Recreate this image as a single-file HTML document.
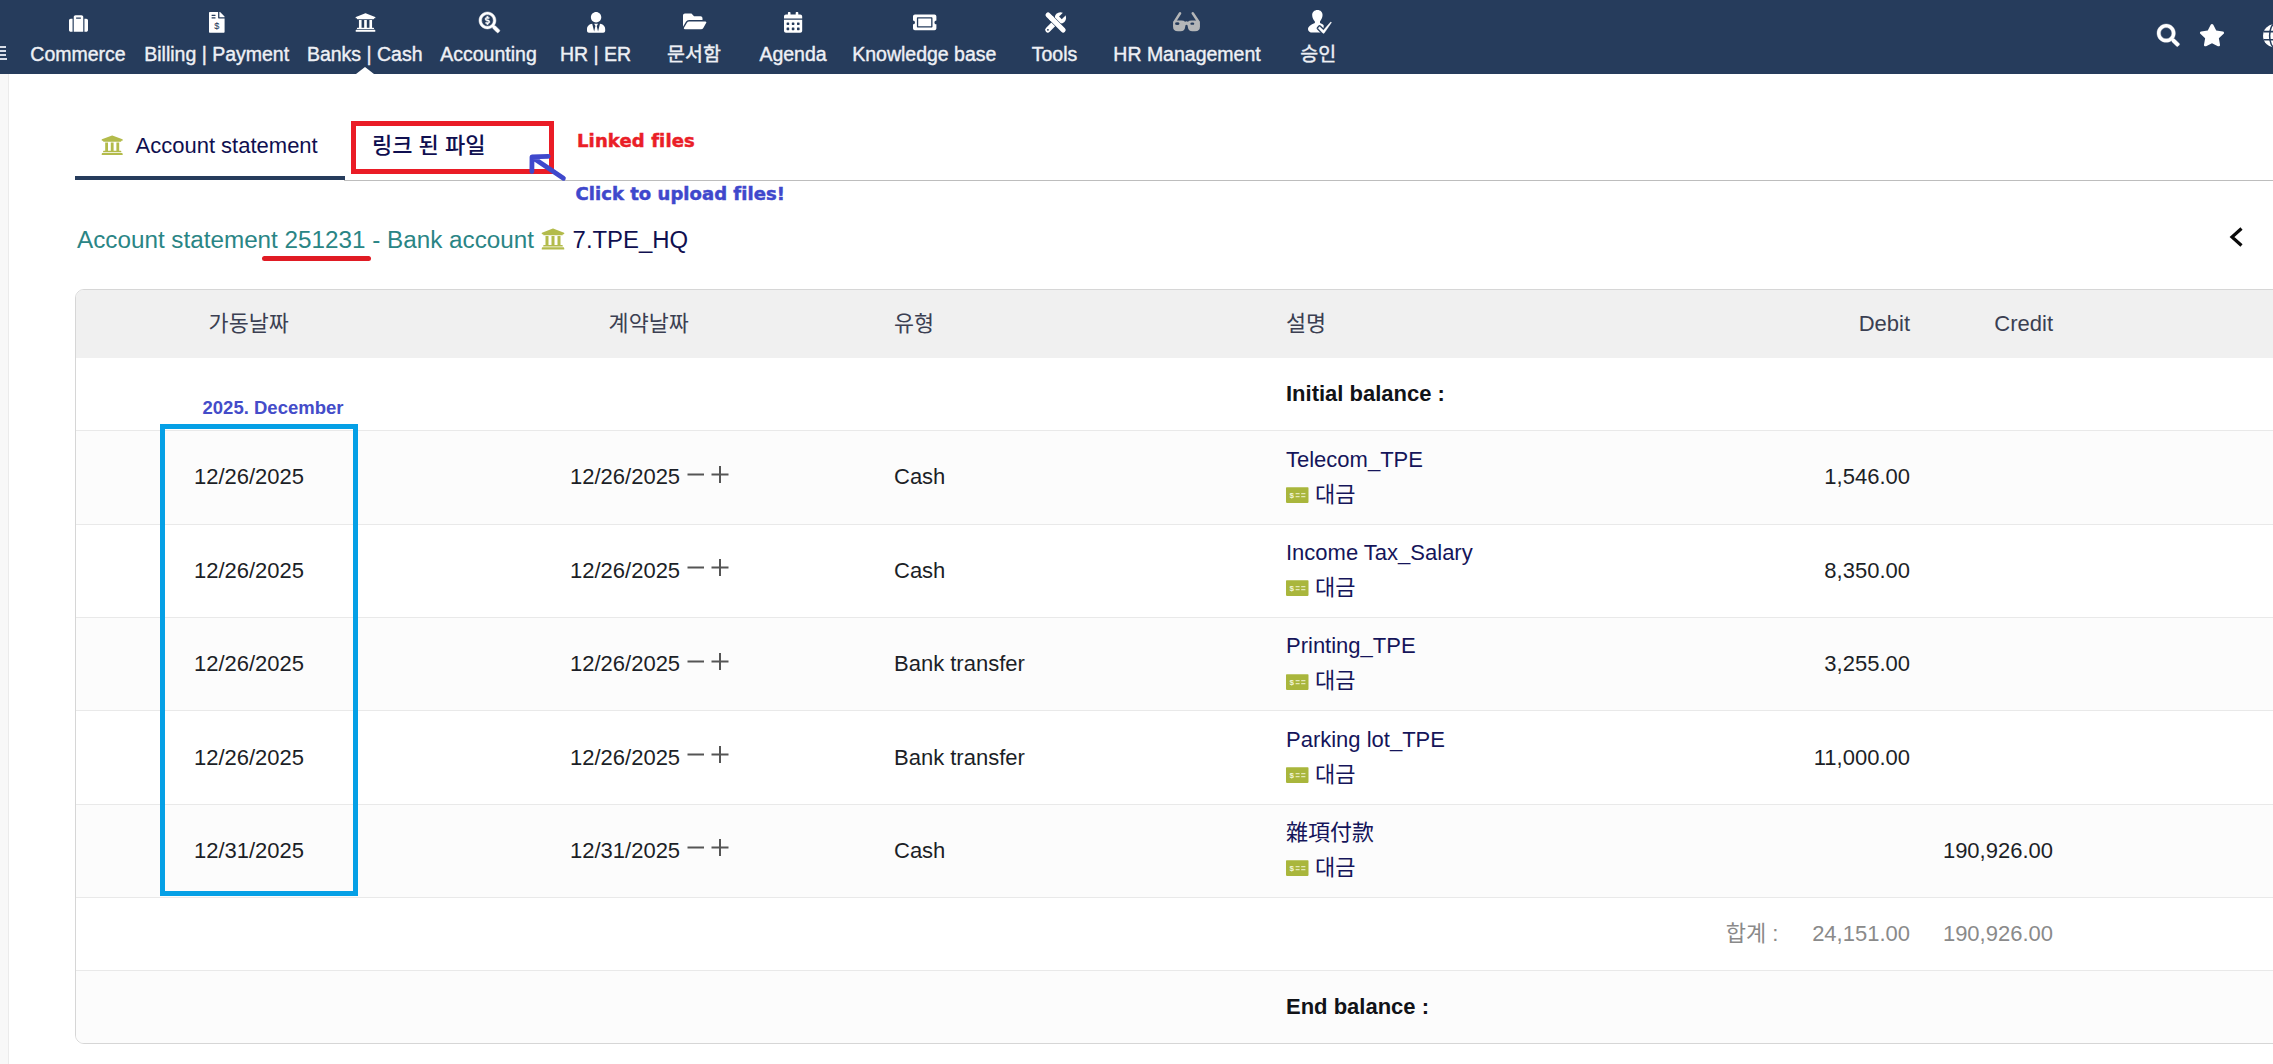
<!DOCTYPE html>
<html lang="ko">
<head>
<meta charset="utf-8">
<title>Account statement</title>
<style>
*{box-sizing:border-box;margin:0;padding:0}
html,body{width:2273px;height:1064px;overflow:hidden;background:#fff}
body{font-family:"Liberation Sans","Noto Sans CJK KR",sans-serif;color:#1f1f1f;position:relative;font-size:22px}
.abs{position:absolute;white-space:nowrap}
#nav{position:absolute;left:0;top:0;width:2273px;height:74px;background:#263c5c;overflow:hidden}
.nl{position:absolute;top:41px;height:26px;line-height:26px;font-size:19.5px;color:#eef0f5;-webkit-text-stroke:0.4px #eef0f5;white-space:nowrap;transform:translateX(-50%)}
.burger{position:absolute;left:0;top:46.3px;width:8px}
.burger i{display:block;height:1.6px;width:5.6px;background:#d8dde7;margin-bottom:2.3px}
.burger i:last-child{width:7.3px;margin-top:0.6px}
#navtri{position:absolute;left:356px;top:67px;width:0;height:0;border-left:9px solid transparent;border-right:9px solid transparent;border-bottom:7.5px solid #fff}
#side{position:absolute;left:0;top:74px;width:9px;height:990px;background:#f8f8f8;border-right:1px solid #ebebeb}
#tabline{position:absolute;left:344px;top:180px;width:1929px;height:1px;background:#bdbdbd}
#tabactive{position:absolute;left:75px;top:176px;width:269.5px;height:4.4px;background:#263c5c}
.tab1{left:135.5px;top:146px;transform:translateY(-50%);font-size:22px;color:#0f0f50}
.tab2{left:372px;top:143px;transform:translateY(-50%);font-size:22px;color:#0f0f50;font-family:"Liberation Sans","Noto Sans CJK KR",sans-serif;font-weight:500}
#redbox{position:absolute;left:351px;top:121px;width:203px;height:53px;border:5px solid #ea1c26}
.ann{-webkit-text-stroke:0.5px currentColor;letter-spacing:0.12px;font-family:"DejaVu Sans","Liberation Sans",sans-serif;font-weight:bold;font-size:18px;line-height:22px}
.ann.red{color:#ea1e27}
.ann.blue{color:#3f48cc;letter-spacing:0.04px}
.title{left:77px;top:240px;transform:translateY(-50%);font-size:24.26px}
.teal{color:#2a8585}
.navy{color:#0f0f50;font-size:23.9px}
.tbank{display:inline-block;width:38.6px}
#redline{position:absolute;left:262px;top:256px;width:109px;height:4.5px;border-radius:3px;background:#e01b24}
#table{position:absolute;left:75px;top:289px;width:2300px;height:755px;border:1px solid #d6d6d6;border-radius:9px;overflow:hidden;background:#fff}
.thead{position:absolute;left:0;top:0;width:100%;height:67.5px;background:#f0f0f0}
.row{position:absolute;left:0;width:100%;border-top:1px solid #e9e9e9}
.th{font-size:21.8px;color:#3b3f52}
.th.kr{font-family:"Liberation Sans","Noto Sans CJK KR",sans-serif}
.th.r{font-size:22px;color:#3b3f52}
.b{font-weight:bold;font-size:22px;color:#111318}
.dec{font-weight:bold;font-size:18.5px;color:#444cc9}
.td{font-size:22px;color:#1c1f27}
.td.g{color:#8a8a8a}
.desc{font-size:22px;color:#15155a}
.desc.kr2{font-family:"Liberation Sans","Noto Sans CJK KR",sans-serif;font-size:22px}
.desc.cjk{font-family:"Liberation Sans","Noto Sans CJK KR","Noto Sans CJK TC",sans-serif;font-size:22px}
#bluebox{position:absolute;left:160px;top:424px;width:198px;height:472px;border:5px solid #05a0e6}
.ni{position:absolute;overflow:visible}

</style>
</head>
<body>
<div id="nav">
<div class="burger"><i></i><i></i><i></i><i></i></div>
<div class="nl" style="left:78px">Commerce</div>
<div class="nl" style="left:216.7px">Billing | Payment</div>
<div class="nl" style="left:364.7px">Banks | Cash</div>
<div class="nl" style="left:488.5px">Accounting</div>
<div class="nl" style="left:595.5px">HR | ER</div>
<div class="nl" style="left:694px">문서함</div>
<div class="nl" style="left:793px">Agenda</div>
<div class="nl" style="left:924.3px">Knowledge base</div>
<div class="nl" style="left:1054.5px">Tools</div>
<div class="nl" style="left:1187px">HR Management</div>
<div class="nl" style="left:1318.3px">승인</div>
<svg class="ni" style="left:69.2px;top:13.7px" width="19" height="19" viewBox="0 0 512 512" ><path fill="#fff" d="M128 480h256V80c0-26.500-21.500-48-48-48H176c-26.500 0-48 21.500-48 48v400zm64-384h128v32H192V96zm320 80v256c0 26.500-21.500 48-48 48h-48V128h48c26.500 0 48 21.500 48 48zM96 480H48c-26.500 0-48-21.500-48-48V176c0-26.500 21.500-48 48-48h48v352z"/></svg>
<svg class="ni" style="left:208.6px;top:12px" width="15.6" height="20.8" viewBox="0 0 384 512" ><path fill="#fff" d="M224 0 H24 C10.700 0 0 10.700 0 24 v464 c0 13.300 10.700 24 24 24 h336 c13.300 0 24-10.700 24-24 V160 H248 c-13.200 0-24-10.800-24-24 V0z M256 0 v128 h128 v-6.100 c0-6.300-2.500-12.400-7-16.900 L279.100 7 c-4.500-4.500-10.600-7-17-7 H256z"/><rect x="64" y="66" width="96" height="30" rx="6" fill="#263c5c"/><rect x="64" y="130" width="96" height="30" rx="6" fill="#263c5c"/><text x="192" y="412" text-anchor="middle" font-family="Liberation Sans, sans-serif" font-size="225" fill="#263c5c" stroke="#263c5c" stroke-width="2">$</text></svg>
<svg class="ni" style="left:354.8px;top:12.2px" width="21" height="21" viewBox="0 0 512 512" ><path fill="#fff" d="M496 128v16a8 8 0 0 1-8 8h-24v12c0 6.627-5.373 12-12 12H60c-6.627 0-12-5.373-12-12v-12H24a8 8 0 0 1-8-8v-16a8 8 0 0 1 4.941-7.392l232-88a7.996 7.996 0 0 1 6.118 0l232 88A8 8 0 0 1 496 128zm-24 304H40c-13.255 0-24 10.745-24 24v16a8 8 0 0 0 8 8h464a8 8 0 0 0 8-8v-16c0-13.255-10.745-24-24-24zM96 192v192H60c-6.627 0-12 5.373-12 12v20h416v-20c0-6.627-5.373-12-12-12h-36V192h-64v192h-64V192h-64v192h-64V192H96z"/></svg>
<svg class="ni" style="left:478.6px;top:11.9px" width="20.8" height="20.8" viewBox="0 0 512 512" ><path fill="#fff" stroke="#fff" stroke-width="12" d="M505.04 442.66l-99.71-99.69c-4.5-4.5-10.6-7-17-7h-16.3c27.6-35.3 44-79.69 44-127.99C416.03 93.09 322.92 0 208.02 0S0 93.09 0 207.98s93.11 207.980 208.020 207.980c48.3 0 92.71-16.4 128.010-44v16.3c0 6.4 2.5 12.5 7 17l99.710 99.690c9.4 9.4 24.6 9.4 33.9 0l28.3-28.3c9.4-9.4 9.4-24.59.1-33.990zm-297.020-90.7c-79.540 0-144.020-64.460-144.020-143.980 0-79.530 64.470-143.980 144.020-143.980 79.540 0 144.010 64.460 144.010 143.980 0 79.530-64.470 143.980-144.010 143.980zm27.110-152.540l-45.010-13.5c-5.160-1.550-8.770-6.780-8.770-12.730 0-7.270 5.3-13.190 11.8-13.190h28.110c4.560 0 8.960 1.290 12.820 3.720 3.240 2.030 7.360 1.910 10.130-.73l11.750-11.210c3.530-3.370 3.330-9.210-.57-12.140-9.1-6.830-20.080-10.770-31.370-11.350V112c0-4.420-3.580-8-8-8h-16c-4.420 0-8 3.580-8 8v16.120c-23.630.63-42.680 20.550-42.680 45.070 0 19.970 12.990 37.810 31.580 43.390l45.010 13.5c5.160 1.550 8.770 6.780 8.770 12.730 0 7.270-5.3 13.190-11.8 13.190h-28.1c-4.560 0-8.960-1.290-12.820-3.720-3.240-2.030-7.360-1.910-10.130.73l-11.750 11.210c-3.530 3.370-3.330 9.210.57 12.140 9.1 6.830 20.080 10.770 31.370 11.350V304c0 4.420 3.580 8 8 8h16c4.420 0 8-3.580 8-8v-16.120c23.630-.63 42.680-20.540 42.680-45.070 0-19.970-12.990-37.810-31.590-43.390z"/></svg>
<svg class="ni" style="left:586.6px;top:12px" width="18.2" height="20.8" viewBox="0 0 448 512" ><path fill="#fff" d="M224 256c70.700 0 128-57.300 128-128S294.700 0 224 0 96 57.300 96 128s57.300 128 128 128zm95.800 32.600L272 480l-32-136 32-56h-96l32 56-32 136-47.800-191.400C56.900 292 0 350.300 0 422.400V464c0 26.500 21.500 48 48 48h352c26.500 0 48-21.500 48-48v-41.600c0-72.100-56.900-130.400-128.200-133.800z"/></svg>
<svg class="ni" style="left:683px;top:10.9px" width="23.4" height="20.8" viewBox="0 0 576 512" ><path fill="#fff" d="M572.694 292.093L500.270 416.248A63.997 63.997 0 0 1 444.989 448H45.025c-18.523 0-30.064-20.093-20.731-36.093l72.424-124.155A64 64 0 0 1 152 256h399.964c18.523 0 30.064 20.093 20.730 36.093zM152 224h328v-48c0-26.510-21.490-48-48-48H272l-64-64H48C21.490 64 0 85.490 0 112v278.046l69.077-118.418C86.214 242.250 117.989 224 152 224z"/></svg>
<svg class="ni" style="left:784.3px;top:12px" width="18.2" height="20.8" viewBox="0 0 448 512" ><path fill="#fff" d="M0 464c0 26.500 21.500 48 48 48h352c26.500 0 48-21.500 48-48V192H0v272zm320-196c0-6.600 5.400-12 12-12h40c6.600 0 12 5.400 12 12v40c0 6.600-5.400 12-12 12h-40c-6.600 0-12-5.400-12-12v-40zm0 128c0-6.600 5.400-12 12-12h40c6.600 0 12 5.400 12 12v40c0 6.600-5.400 12-12 12h-40c-6.600 0-12-5.400-12-12v-40zM192 268c0-6.600 5.400-12 12-12h40c6.600 0 12 5.400 12 12v40c0 6.600-5.400 12-12 12h-40c-6.600 0-12-5.400-12-12v-40zm0 128c0-6.600 5.400-12 12-12h40c6.600 0 12 5.400 12 12v40c0 6.600-5.400 12-12 12h-40c-6.600 0-12-5.400-12-12v-40zM64 268c0-6.600 5.400-12 12-12h40c6.600 0 12 5.400 12 12v40c0 6.600-5.400 12-12 12H76c-6.600 0-12-5.400-12-12v-40zm0 128c0-6.600 5.400-12 12-12h40c6.600 0 12 5.400 12 12v40c0 6.600-5.400 12-12 12H76c-6.600 0-12-5.400-12-12v-40zM400 64h-48V16c0-8.800-7.200-16-16-16h-32c-8.800 0-16 7.200-16 16v48H160V16c0-8.800-7.200-16-16-16h-32c-8.800 0-16 7.200-16 16v48H48C21.500 64 0 85.500 0 112v48h448v-48c0-26.500-21.500-48-48-48z"/></svg>
<svg class="ni" style="left:912.6px;top:12px" width="23.4" height="20.8" viewBox="0 0 576 512" ><path fill="#fff" d="M128 160h320v192H128V160zm400 96c0 26.510 21.490 48 48 48v96c0 26.510-21.490 48-48 48H48c-26.510 0-48-21.490-48-48v-96c26.510 0 48-21.490 48-48s-21.490-48-48-48v-96c0-26.510 21.490-48 48-48h480c26.510 0 48 21.490 48 48v96c-26.510 0-48 21.490-48 48zm-48-104c0-13.255-10.745-24-24-24H120c-13.255 0-24 10.745-24 24v208c0 13.255 10.745 24 24 24h336c13.255 0 24-10.745 24-24V152z"/></svg>
<svg class="ni" style="left:1044.6px;top:11.9px" width="21.2" height="21" viewBox="0 0 100 100" ><g fill="none">
<path d="M13 85 L60 38" stroke="#fff" stroke-width="25" stroke-linecap="round"/>
<circle cx="73" cy="28" r="27" fill="#fff"/>
<path d="M73 28 L102 -1" stroke="#263c5c" stroke-width="18"/>
<path d="M14 14 L86 86" stroke="#263c5c" stroke-width="29" stroke-linecap="round"/>
<path d="M14 14 L30 30" stroke="#fff" stroke-width="24" stroke-linecap="round"/>
<path d="M30 30 L86 86" stroke="#fff" stroke-width="24" stroke-linecap="round"/>
</g>
<circle cx="13.5" cy="85" r="4.5" fill="#263c5c"/></svg>
<svg class="ni" style="left:1173.1px;top:11.9px" width="27" height="19.3" viewBox="0 0 134 96" ><g fill="none" stroke="#b4b6b8" stroke-width="12.5" stroke-linecap="round">
<path d="M35 6 L7 50"/><path d="M98 6 L127 50"/>
</g>
<path fill="#b4b6b8" d="M0 58 q0-16 16-16 h26 q12 0 18 6 q7-3 14 0 q6-6 18-6 h26 q16 0 16 16 v14 q0 24-24 24 h-14 q-20 0-22-20 l-2-10 q-5-5-10 0 l-2 10 q-2 20-22 20 h-14 q-24 0-24-24z"/>
<ellipse cx="21" cy="58" rx="11" ry="6.5" fill="#263c5c"/><ellipse cx="96" cy="58" rx="10" ry="6" fill="#263c5c"/></svg>
<svg class="ni" style="left:1307.8px;top:9.75px" width="23.2" height="23.2" viewBox="245 180 725 725" ><path fill="#fff" d="M540 180 C640 180 700 250 700 340 C700 430 650 500 620 540 L620 590 C660 610 715 625 735 660 L735 880 L330 880 C270 870 245 820 245 770 C245 700 330 640 460 590 L460 540 C420 500 375 430 375 340 C375 250 440 180 540 180Z"/>
<path d="M562 752 L608 700 L728 815 L955 555 L978 570 L748 905 L712 905Z" fill="#263c5c" stroke="#263c5c" stroke-width="96" stroke-linejoin="round"/>
<path d="M562 752 L608 700 L728 815 L955 555 L978 570 L748 905 L712 905Z" fill="#fff" stroke="#fff" stroke-width="14" stroke-linejoin="round"/></svg>
<svg class="ni" style="left:2156.6px;top:23.6px" width="22.6" height="22.6" viewBox="0 0 512 512" ><path fill="#fff" stroke="#fff" stroke-width="8" d="M505 442.700L405.300 343c-4.500-4.500-10.600-7-17-7H372c27.600-35.300 44-79.700 44-128C416 93.100 322.900 0 208 0S0 93.100 0 208s93.100 208 208 208c48.300 0 92.700-16.400 128-44v16.300c0 6.400 2.500 12.500 7 17l99.700 99.700c9.400 9.400 24.600 9.400 33.900 0l28.300-28.300c9.400-9.400 9.400-24.600.100-34zM208 336c-70.700 0-128-57.200-128-128 0-70.700 57.200-128 128-128 70.700 0 128 57.200 128 128 0 70.700-57.200 128-128 128z"/></svg>
<svg class="ni" style="left:2199.3px;top:23.5px" width="26" height="22.3" viewBox="0 0 576 512" preserveAspectRatio="none"><path fill="#fff" d="M259.300 17.800L194 150.200 47.900 171.500c-26.200 3.800-36.700 36.100-17.700 54.600l105.700 103-25 145.500c-4.500 26.300 23.200 46 46.400 33.700L288 439.600l130.700 68.700c23.200 12.200 50.900-7.400 46.400-33.700l-25-145.500 105.700-103c19-18.500 8.500-50.800-17.700-54.600L382 150.200 316.700 17.800c-11.700-23.600-45.600-23.900-57.400 0z"/></svg>
<svg class="ni" style="left:2262.2px;top:23.3px" width="25.4" height="25.4" viewBox="0 0 100 100" ><circle cx="50" cy="50" r="46" fill="#fff"/>
<g fill="none" stroke="#263c5c" stroke-width="6"><ellipse cx="50" cy="50" rx="20" ry="46"/><path d="M50 4 V96 M6 34 H94 M6 66 H94"/></g></svg>
<div id="navtri"></div>
</div>
<div id="side"></div>
<div id="tabline"></div><div id="tabactive"></div>
<div class="abs tab1">Account statement</div>
<div id="redbox"></div>
<div class="abs tab2">링크 된 파일</div>
<div class="abs ann red" style="left:577px;top:129.5px">Linked files</div>
<div class="abs ann blue" style="left:575.5px;top:182.5px">Click to upload files!</div>
<svg class="abs" style="left:520px;top:145px" width="60" height="45" viewBox="520 145 60 45"><path d="M563.4 178.3 L532.2 157.2 M548.2 156.3 L532 156.8 L531.9 171.6" fill="none" stroke="#3f48cc" stroke-width="4.8" stroke-linecap="round" stroke-linejoin="round"/></svg>
<div class="abs title"><span class="teal">Account statement 251231 - Bank account</span><span class="tbank"></span><span class="navy">7.TPE_HQ</span></div>
<div id="redline"></div>
<svg class="abs" style="left:101.2px;top:133.8px" width="22.4" height="22.4" viewBox="0 0 512 512"><path fill="#b3bb4b" d="M496 128v16a8 8 0 0 1-8 8h-24v12c0 6.627-5.373 12-12 12H60c-6.627 0-12-5.373-12-12v-12H24a8 8 0 0 1-8-8v-16a8 8 0 0 1 4.941-7.392l232-88a7.996 7.996 0 0 1 6.118 0l232 88A8 8 0 0 1 496 128zm-24 304H40c-13.255 0-24 10.745-24 24v16a8 8 0 0 0 8 8h464a8 8 0 0 0 8-8v-16c0-13.255-10.745-24-24-24zM96 192v192H60c-6.627 0-12 5.373-12 12v20h416v-20c0-6.627-5.373-12-12-12h-36V192h-64v192h-64V192h-64v192h-64V192H96z"/></svg>
<svg class="abs" style="left:540.65px;top:227.4px" width="24" height="24" viewBox="0 0 512 512"><path fill="#b3bb4b" d="M496 128v16a8 8 0 0 1-8 8h-24v12c0 6.627-5.373 12-12 12H60c-6.627 0-12-5.373-12-12v-12H24a8 8 0 0 1-8-8v-16a8 8 0 0 1 4.941-7.392l232-88a7.996 7.996 0 0 1 6.118 0l232 88A8 8 0 0 1 496 128zm-24 304H40c-13.255 0-24 10.745-24 24v16a8 8 0 0 0 8 8h464a8 8 0 0 0 8-8v-16c0-13.255-10.745-24-24-24zM96 192v192H60c-6.627 0-12 5.373-12 12v20h416v-20c0-6.627-5.373-12-12-12h-36V192h-64v192h-64V192h-64v192h-64V192H96z"/></svg>
<svg class="abs" style="left:2226px;top:224px" width="22" height="26" viewBox="0 0 22 26"><path d="M15.5 4.5 L6 13 L15.5 21.5" fill="none" stroke="#0a0a0a" stroke-width="3.2"/></svg>
<div id="table">
<div class="thead"></div>
<div class="row" style="top:67.5px;height:73px;background:#fff;border-top:none"></div>
<div class="row" style="top:140.0px;height:94px;background:#fcfcfc"></div>
<div class="row" style="top:234.0px;height:93px;background:#fff"></div>
<div class="row" style="top:327.0px;height:93px;background:#fcfcfc"></div>
<div class="row" style="top:420.0px;height:94px;background:#fff"></div>
<div class="row" style="top:514.0px;height:93px;background:#fcfcfc"></div>
<div class="row" style="top:607px;height:73px;background:#fff"></div>
<div class="row" style="top:680px;height:74px;background:#fcfcfc"></div>
</div>
<div class="abs th kr" style="left:248.7px;top:321.4px;transform:translate(-50%,-50%)">가동날짜</div>
<div class="abs th kr" style="left:648.7px;top:321.4px;transform:translate(-50%,-50%)">계약날짜</div>
<div class="abs th kr" style="left:894px;top:321.4px;transform:translateY(-50%)">유형</div>
<div class="abs th kr" style="left:1286px;top:321.4px;transform:translateY(-50%)">설명</div>
<div class="abs th r" style="right:363px;top:324px;transform:translateY(-50%)">Debit</div>
<div class="abs th r" style="right:220px;top:324px;transform:translateY(-50%)">Credit</div>
<div class="abs b" style="left:1286px;top:394px;transform:translateY(-50%)">Initial balance :</div>
<div class="abs dec" style="left:273px;top:407.5px;transform:translate(-50%,-50%)">2025. December</div>
<div class="abs td" style="left:249px;top:477.3px;transform:translate(-50%,-50%)">12/26/2025</div>
<div class="abs td" style="left:570px;top:477.3px;transform:translateY(-50%)">12/26/2025</div>
<svg class="abs" style="left:686px;top:463.7px" width="44" height="22" viewBox="0 0 44 22"><path d="M1.5 10.5 H18 M25.5 10.5 H42.5 M34 2 V19" fill="none" stroke="#555" stroke-width="2"/></svg>
<div class="abs td" style="left:894px;top:477.3px;transform:translateY(-50%)">Cash</div>
<div class="abs desc" style="left:1286px;top:459.8px;transform:translateY(-50%)">Telecom_TPE</div>
<svg class="abs" style="left:1286px;top:486.7px" width="23" height="16" viewBox="0 0 23 16"><rect x="0" y="0.3" width="22.5" height="15.6" rx="0.8" fill="#a9b63c"/><path d="M9.6 6.6 H13.6 M15.2 6.6 H19.4 M9.6 9.6 H13.6 M15.2 9.6 H19.4" stroke="#e3e8b8" stroke-width="1.3"/><text x="3.4" y="11" font-family="Liberation Sans, sans-serif" font-size="8" font-weight="bold" fill="#f2f5d8">$</text></svg>
<div class="abs desc kr2" style="left:1315px;top:491.5px;transform:translateY(-50%)">대금</div>
<div class="abs td" style="right:363px;top:477.3px;transform:translateY(-50%)">1,546.00</div>
<div class="abs td" style="left:249px;top:570.7px;transform:translate(-50%,-50%)">12/26/2025</div>
<div class="abs td" style="left:570px;top:570.7px;transform:translateY(-50%)">12/26/2025</div>
<svg class="abs" style="left:686px;top:557.1px" width="44" height="22" viewBox="0 0 44 22"><path d="M1.5 10.5 H18 M25.5 10.5 H42.5 M34 2 V19" fill="none" stroke="#555" stroke-width="2"/></svg>
<div class="abs td" style="left:894px;top:570.7px;transform:translateY(-50%)">Cash</div>
<div class="abs desc" style="left:1286px;top:552.7px;transform:translateY(-50%)">Income Tax_Salary</div>
<svg class="abs" style="left:1286px;top:580.1px" width="23" height="16" viewBox="0 0 23 16"><rect x="0" y="0.3" width="22.5" height="15.6" rx="0.8" fill="#a9b63c"/><path d="M9.6 6.6 H13.6 M15.2 6.6 H19.4 M9.6 9.6 H13.6 M15.2 9.6 H19.4" stroke="#e3e8b8" stroke-width="1.3"/><text x="3.4" y="11" font-family="Liberation Sans, sans-serif" font-size="8" font-weight="bold" fill="#f2f5d8">$</text></svg>
<div class="abs desc kr2" style="left:1315px;top:584.9px;transform:translateY(-50%)">대금</div>
<div class="abs td" style="right:363px;top:570.7px;transform:translateY(-50%)">8,350.00</div>
<div class="abs td" style="left:249px;top:664.1px;transform:translate(-50%,-50%)">12/26/2025</div>
<div class="abs td" style="left:570px;top:664.1px;transform:translateY(-50%)">12/26/2025</div>
<svg class="abs" style="left:686px;top:650.5px" width="44" height="22" viewBox="0 0 44 22"><path d="M1.5 10.5 H18 M25.5 10.5 H42.5 M34 2 V19" fill="none" stroke="#555" stroke-width="2"/></svg>
<div class="abs td" style="left:894px;top:664.1px;transform:translateY(-50%)">Bank transfer</div>
<div class="abs desc" style="left:1286px;top:646.1px;transform:translateY(-50%)">Printing_TPE</div>
<svg class="abs" style="left:1286px;top:673.5px" width="23" height="16" viewBox="0 0 23 16"><rect x="0" y="0.3" width="22.5" height="15.6" rx="0.8" fill="#a9b63c"/><path d="M9.6 6.6 H13.6 M15.2 6.6 H19.4 M9.6 9.6 H13.6 M15.2 9.6 H19.4" stroke="#e3e8b8" stroke-width="1.3"/><text x="3.4" y="11" font-family="Liberation Sans, sans-serif" font-size="8" font-weight="bold" fill="#f2f5d8">$</text></svg>
<div class="abs desc kr2" style="left:1315px;top:678.3px;transform:translateY(-50%)">대금</div>
<div class="abs td" style="right:363px;top:664.1px;transform:translateY(-50%)">3,255.00</div>
<div class="abs td" style="left:249px;top:757.5px;transform:translate(-50%,-50%)">12/26/2025</div>
<div class="abs td" style="left:570px;top:757.5px;transform:translateY(-50%)">12/26/2025</div>
<svg class="abs" style="left:686px;top:743.9px" width="44" height="22" viewBox="0 0 44 22"><path d="M1.5 10.5 H18 M25.5 10.5 H42.5 M34 2 V19" fill="none" stroke="#555" stroke-width="2"/></svg>
<div class="abs td" style="left:894px;top:757.5px;transform:translateY(-50%)">Bank transfer</div>
<div class="abs desc" style="left:1286px;top:739.5px;transform:translateY(-50%)">Parking lot_TPE</div>
<svg class="abs" style="left:1286px;top:766.9px" width="23" height="16" viewBox="0 0 23 16"><rect x="0" y="0.3" width="22.5" height="15.6" rx="0.8" fill="#a9b63c"/><path d="M9.6 6.6 H13.6 M15.2 6.6 H19.4 M9.6 9.6 H13.6 M15.2 9.6 H19.4" stroke="#e3e8b8" stroke-width="1.3"/><text x="3.4" y="11" font-family="Liberation Sans, sans-serif" font-size="8" font-weight="bold" fill="#f2f5d8">$</text></svg>
<div class="abs desc kr2" style="left:1315px;top:771.7px;transform:translateY(-50%)">대금</div>
<div class="abs td" style="right:363px;top:757.5px;transform:translateY(-50%)">11,000.00</div>
<div class="abs td" style="left:249px;top:850.9px;transform:translate(-50%,-50%)">12/31/2025</div>
<div class="abs td" style="left:570px;top:850.9px;transform:translateY(-50%)">12/31/2025</div>
<svg class="abs" style="left:686px;top:837.3px" width="44" height="22" viewBox="0 0 44 22"><path d="M1.5 10.5 H18 M25.5 10.5 H42.5 M34 2 V19" fill="none" stroke="#555" stroke-width="2"/></svg>
<div class="abs td" style="left:894px;top:850.9px;transform:translateY(-50%)">Cash</div>
<div class="abs desc cjk" style="left:1286px;top:830.3px;transform:translateY(-50%)">雜項付款</div>
<svg class="abs" style="left:1286px;top:860.3px" width="23" height="16" viewBox="0 0 23 16"><rect x="0" y="0.3" width="22.5" height="15.6" rx="0.8" fill="#a9b63c"/><path d="M9.6 6.6 H13.6 M15.2 6.6 H19.4 M9.6 9.6 H13.6 M15.2 9.6 H19.4" stroke="#e3e8b8" stroke-width="1.3"/><text x="3.4" y="11" font-family="Liberation Sans, sans-serif" font-size="8" font-weight="bold" fill="#f2f5d8">$</text></svg>
<div class="abs desc kr2" style="left:1315px;top:865.1px;transform:translateY(-50%)">대금</div>
<div class="abs td" style="right:220px;top:850.9px;transform:translateY(-50%)">190,926.00</div>
<div class="abs td g kr" style="right:494.5px;top:931px;transform:translateY(-50%)">합계 :</div>
<div class="abs td g" style="right:363px;top:933.5px;transform:translateY(-50%)">24,151.00</div>
<div class="abs td g" style="right:220px;top:933.5px;transform:translateY(-50%)">190,926.00</div>
<div class="abs b" style="left:1286px;top:1007px;transform:translateY(-50%)">End balance :</div>
<div id="bluebox"></div>
</body>
</html>
